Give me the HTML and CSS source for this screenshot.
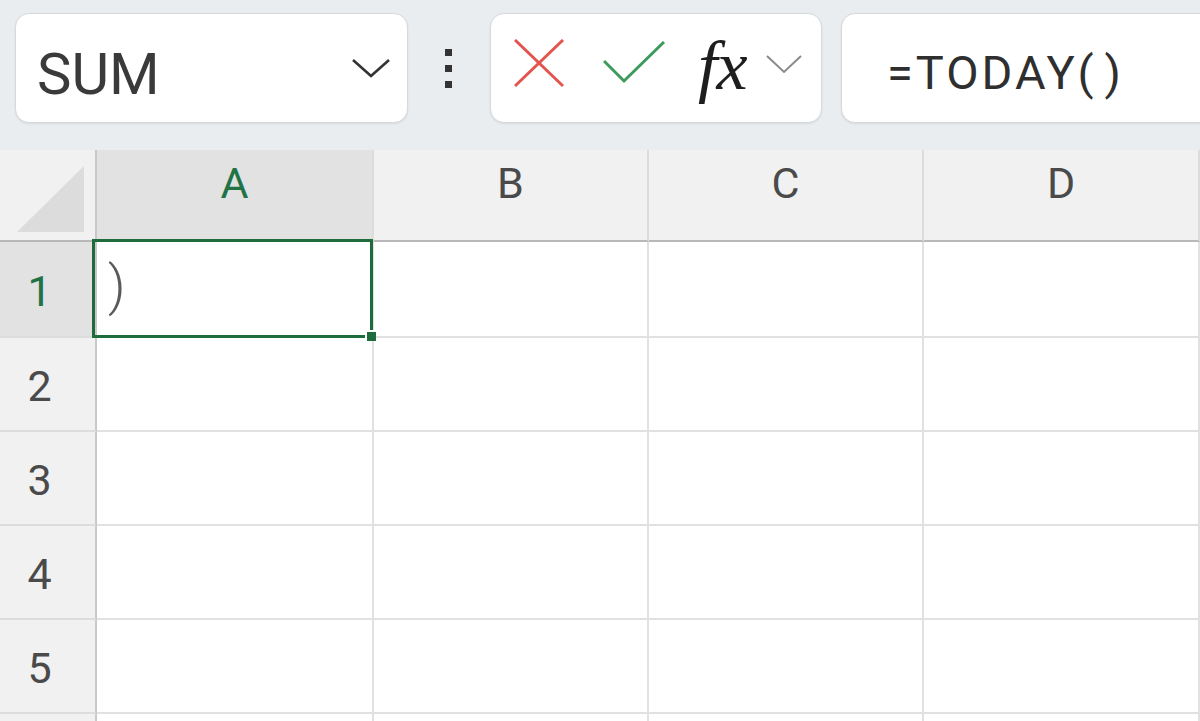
FILE: index.html
```html
<!DOCTYPE html>
<html lang="en">
<head>
  <meta charset="UTF-8">
  <meta name="viewport" content="width=device-width, initial-scale=1.0">
  <title>Sheet</title>
  <link rel="stylesheet" href="styles.css">
</head>
<body>
  <div class="toolbar">
    <div class="name-box">
      <span class="name-text">SUM</span>
      <svg class="chevron" width="40" height="20" viewBox="0 0 40 20"><polyline points="2,2 20,18 38,2" fill="none" stroke="#333" stroke-width="2.6"/></svg>
    </div>
    <div class="grip">
      <span></span><span></span><span></span>
    </div>
    <div class="fx-box">
      <svg class="cancel" width="50" height="50" viewBox="0 0 50 50"><line x1="1" y1="1" x2="49" y2="47" stroke="#e3544e" stroke-width="3"/><line x1="49" y1="1" x2="1" y2="47" stroke="#e3544e" stroke-width="3"/></svg>
      <svg class="enter" width="62" height="44" viewBox="0 0 62 44"><polyline points="1,20 21,40 61,1" fill="none" stroke="#3d9a5d" stroke-width="3"/></svg>
      <span class="fx">fx</span>
      <svg class="fx-chevron" width="38" height="20" viewBox="0 0 38 20"><polyline points="2,2 19,18 36,2" fill="none" stroke="#8a8a8a" stroke-width="2"/></svg>
    </div>
    <div class="formula-box">
      <span class="formula-text">=TODAY(&#8202;)</span>
    </div>
  </div>

  <div class="sheet">
    <div class="corner"><div class="corner-tri"></div></div>
    <div class="col-head active">A</div>
    <div class="col-head">B</div>
    <div class="col-head">C</div>
    <div class="col-head">D</div>
    <div class="col-head"></div>

    <div class="row-head active">1</div>
    <div class="cell selected">
      <span class="cell-text">)</span>
      <div class="cursor"><div class="handle"></div></div>
    </div>
    <div class="cell"></div><div class="cell"></div><div class="cell"></div><div class="cell"></div>

    <div class="row-head">2</div>
    <div class="cell"></div><div class="cell"></div><div class="cell"></div><div class="cell"></div><div class="cell"></div>

    <div class="row-head">3</div>
    <div class="cell"></div><div class="cell"></div><div class="cell"></div><div class="cell"></div><div class="cell"></div>

    <div class="row-head">4</div>
    <div class="cell"></div><div class="cell"></div><div class="cell"></div><div class="cell"></div><div class="cell"></div>

    <div class="row-head">5</div>
    <div class="cell"></div><div class="cell"></div><div class="cell"></div><div class="cell"></div><div class="cell"></div>

    <div class="row-head"></div>
    <div class="cell"></div><div class="cell"></div><div class="cell"></div><div class="cell"></div><div class="cell"></div>
  </div>
</body>
</html>
```

FILE: styles.css
```css
html, body {
  margin: 0;
  padding: 0;
  height: 100%;
  overflow: hidden;
  background-color: #ffffff;
  font-family: Roboto, "Liberation Sans", Arial, sans-serif;
}

.toolbar {
  display: flex;
  align-items: flex-start;
  height: 150px;
  box-sizing: border-box;
  padding: 13px 0 0 15px;
  background-color: #e9edf0;
  overflow: hidden;
}

.name-box,
.fx-box,
.formula-box {
  height: 110px;
  box-sizing: border-box;
  background-color: #ffffff;
  border: 1px solid #d6d9dc;
  border-radius: 14px;
  box-shadow: 0 1px 2px rgba(0,0,0,0.08);
  display: flex;
  align-items: center;
  flex-shrink: 0;
}

.name-box {
  width: 393px;
  justify-content: space-between;
  padding: 12px 16px 0 21px;
}

.name-text {
  font-size: 58px;
  line-height: 1;
  color: #3a3a3a;
}

.chevron {
  margin-top: -12px;
}

.grip {
  width: 82px;
  height: 110px;
  display: flex;
  flex-direction: column;
  align-items: center;
  justify-content: center;
  gap: 9px;
  flex-shrink: 0;
}

.grip span {
  display: block;
  width: 7px;
  height: 7px;
  background-color: #333;
  margin-left: -1px;
}

.fx-box {
  width: 332px;
  padding-left: 23px;
}

.cancel {
  margin-top: -9px;
}

.enter {
  margin-left: 39px;
  margin-top: -11px;
}

.fx {
  font-family: "Liberation Serif", "Times New Roman", serif;
  font-style: italic;
  font-size: 70px;
  line-height: 1;
  color: #1e1e1e;
  margin-left: 33px;
  margin-top: -4px;
  letter-spacing: -1px;
}

.fx-chevron {
  margin-left: 18px;
  margin-top: -8px;
}

.formula-box {
  margin-left: 19px;
  width: 420px;
  padding: 8px 0 0 45px;
}

.formula-text {
  font-size: 47px;
  line-height: 1;
  color: #2f2f2f;
  letter-spacing: 3px;
}

.sheet {
  display: grid;
  grid-template-columns: 97px 277px 275px 275px 276px 1fr;
  grid-template-rows: 92px 96px 94px 94px 94px 94px 94px;
}

.corner,
.col-head,
.row-head {
  background-color: #f1f1f1;
  color: #4a4a4a;
  font-size: 43px;
  box-sizing: border-box;
}

.corner {
  position: relative;
  border-right: 2px solid #c8c8c8;
  border-bottom: 2px solid #b8b8b8;
}

.corner-tri {
  position: absolute;
  right: 11px;
  bottom: 8px;
  width: 0;
  height: 0;
  border-left: 67px solid transparent;
  border-bottom: 66px solid #dcdcdc;
}

.col-head {
  display: flex;
  justify-content: center;
  padding-top: 12px;
  line-height: 1;
  border-right: 2px solid #dcdcdc;
  border-bottom: 2px solid #b8b8b8;
}

.row-head {
  display: flex;
  align-items: center;
  justify-content: center;
  padding: 4px 16px 0 0;
  line-height: 1;
  border-right: 2px solid #c8c8c8;
  border-bottom: 2px solid #dcdcdc;
}

.col-head.active,
.row-head.active {
  background-color: #e2e2e2;
  color: #217346;
}

.cell {
  box-sizing: border-box;
  border-right: 2px solid #e1e1e1;
  border-bottom: 2px solid #e1e1e1;
  background-color: #ffffff;
}

.cell.selected {
  position: relative;
  display: flex;
  align-items: center;
  padding-left: 11px;
}

.cell-text {
  font-size: 54px;
  font-weight: 300;
  line-height: 1;
  color: #5a5a5a;
  margin-top: -6px;
}

.cursor {
  position: absolute;
  top: -3px;
  left: -5px;
  right: -1px;
  bottom: -2px;
  border: 3px solid #1e6b3c;
}

.handle {
  position: absolute;
  right: -6px;
  bottom: -6px;
  width: 9px;
  height: 9px;
  background-color: #1e6b3c;
  border: 2px solid #ffffff;
  border-right: none;
  border-bottom: none;
}
```
